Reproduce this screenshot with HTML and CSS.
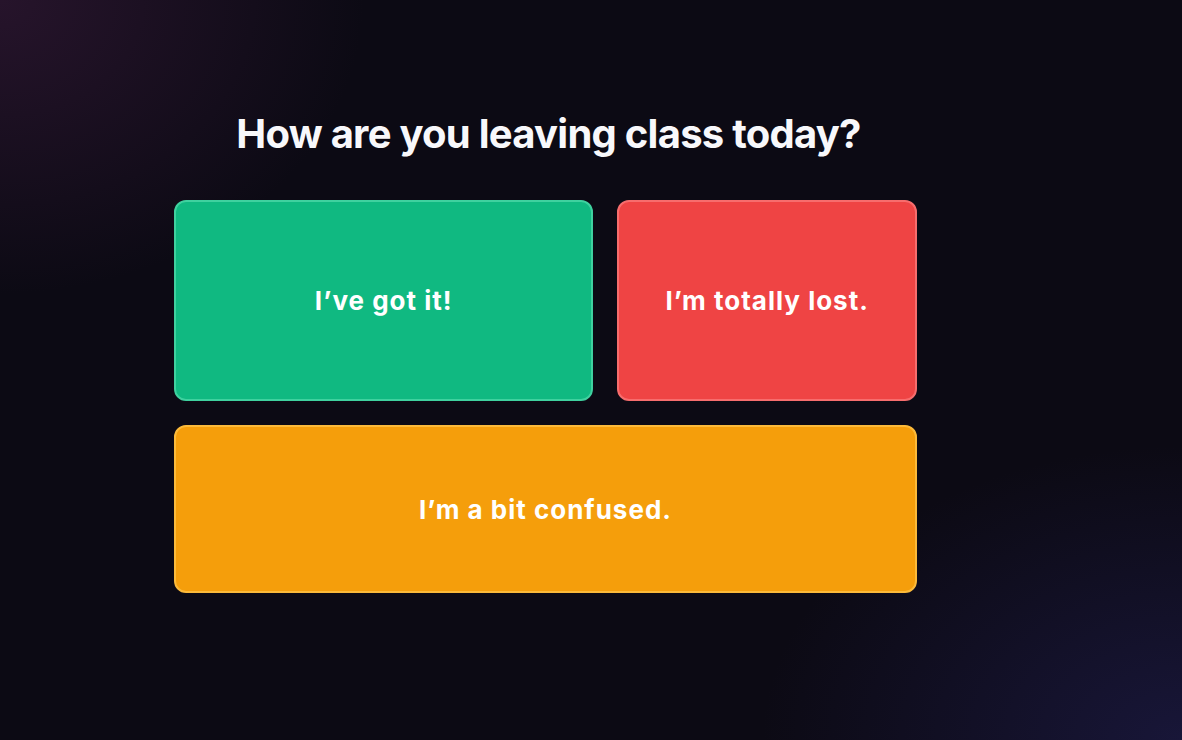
FILE: index.html
```html
<!DOCTYPE html>
<html lang="en">
<head>
<meta charset="utf-8">
<title>Exit ticket</title>
<link rel="stylesheet" href="styles.css">
</head>
<body>
<main class="page">
  <section class="poll">
    <h1 class="title">How are you leaving class today?</h1>
    <div class="grid">
      <button class="card card-green">I’ve got it!</button>
      <button class="card card-red">I’m totally lost.</button>
      <button class="card card-amber card-wide">I’m a bit confused.</button>
    </div>
  </section>
</main>
</body>
</html>
```
FILE: styles.css
```css
* { box-sizing: border-box; }
html, body { margin: 0; height: 100%; }
body {
  background:
    radial-gradient(ellipse 520px 420px at 0% 0%, rgba(60, 28, 62, 0.55), transparent 70%),
    radial-gradient(ellipse 600px 420px at 100% 100%, rgba(32, 30, 80, 0.6), transparent 70%),
    #0c0a14;
  font-family: Inter, "Noto Sans", sans-serif;
  color: #f8f8fb;
  overflow: hidden;
}
.page {
  padding: 108px 0 0 174px;
}
.poll {
  width: 743px;
  display: flex;
  flex-direction: column;
  align-items: center;
}
.title {
  margin: 0 0 40px 6px;
  font-size: 40px;
  font-weight: 700;
  letter-spacing: -0.75px;
  line-height: 52px;
  color: #f8f8fb;
}
.grid {
  width: 100%;
  display: grid;
  grid-template-columns: 420fr 300fr;
  gap: 24px;
}
.card {
  font-family: inherit;
  font-size: 26px;
  font-weight: 700;
  color: #ffffff;
  border-radius: 12px;
  border: 2px solid;
  height: 201px;
  display: flex;
  align-items: center;
  justify-content: center;
  letter-spacing: 1px;
  cursor: pointer;
}
.card-green { background: #10b981; border-color: #3fd19f; }
.card-red { background: #ef4444; border-color: #f76d6d; }
.card-amber { background: #f59e0b; border-color: #fcba3a; }
.card-wide { grid-column: 1 / -1; height: 168px; }
```
